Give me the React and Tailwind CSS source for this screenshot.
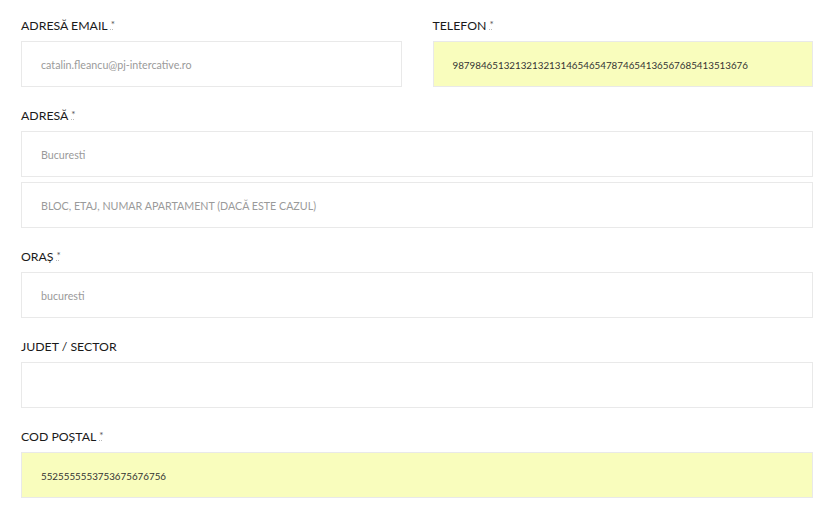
const Label = ({ children, required }) => (
  <label className="mb-[6px] flex items-start text-[12.3px] leading-[18px] text-[#1a1a1a]">
    <span>{children}</span>
    {required && (
      <abbr
        title="obligatoriu"
        className="ml-[3px] text-[10px] leading-[14px] text-[#555] underline decoration-dotted decoration-[#bbb]"
      >
        *
      </abbr>
    )}
  </label>
);

const Field = ({ value, filled, dark }) => (
  <div
    className={`flex h-[46px] items-center border border-[#e9e9e9] pt-[3px] pl-[19px] ${
      filled ? "bg-[#f9fdbd] text-[9.8px]" : "bg-white text-[10.7px]"
    } ${dark ? "text-[#333]" : "text-[#9a9a9a]"}`}
  >
    {value}
  </div>
);

export default function App() {
  return (
    <div
      className="min-h-screen bg-white pt-[17px] pl-[21px] pr-[18px]"
      style={{ fontFamily: "Lato, 'Noto Sans', sans-serif" }}
    >
      <div className="mb-[20px] grid grid-cols-2 gap-x-[31px]">
        <div>
          <Label required>ADRESĂ EMAIL</Label>
          <Field value="catalin.fleancu@pj-intercative.ro" />
        </div>
        <div>
          <Label required>TELEFON</Label>
          <Field value="9879846513213213213146546547874654136567685413513676" filled dark />
        </div>
      </div>

      <div className="mb-[20px]">
        <Label required>ADRESĂ</Label>
        <div className="flex flex-col gap-[5px]">
          <Field value="Bucuresti" />
          <Field value="BLOC, ETAJ, NUMAR APARTAMENT (DACĂ ESTE CAZUL)" />
        </div>
      </div>

      <div className="mb-[20px]">
        <Label required>ORAȘ</Label>
        <Field value="bucuresti" />
      </div>

      <div className="mb-[20px]">
        <Label>JUDET / SECTOR</Label>
        <Field value="" />
      </div>

      <div className="mb-[20px]">
        <Label required>COD POȘTAL</Label>
        <Field value="5525555553753675676756" filled dark />
      </div>
    </div>
  );
}
